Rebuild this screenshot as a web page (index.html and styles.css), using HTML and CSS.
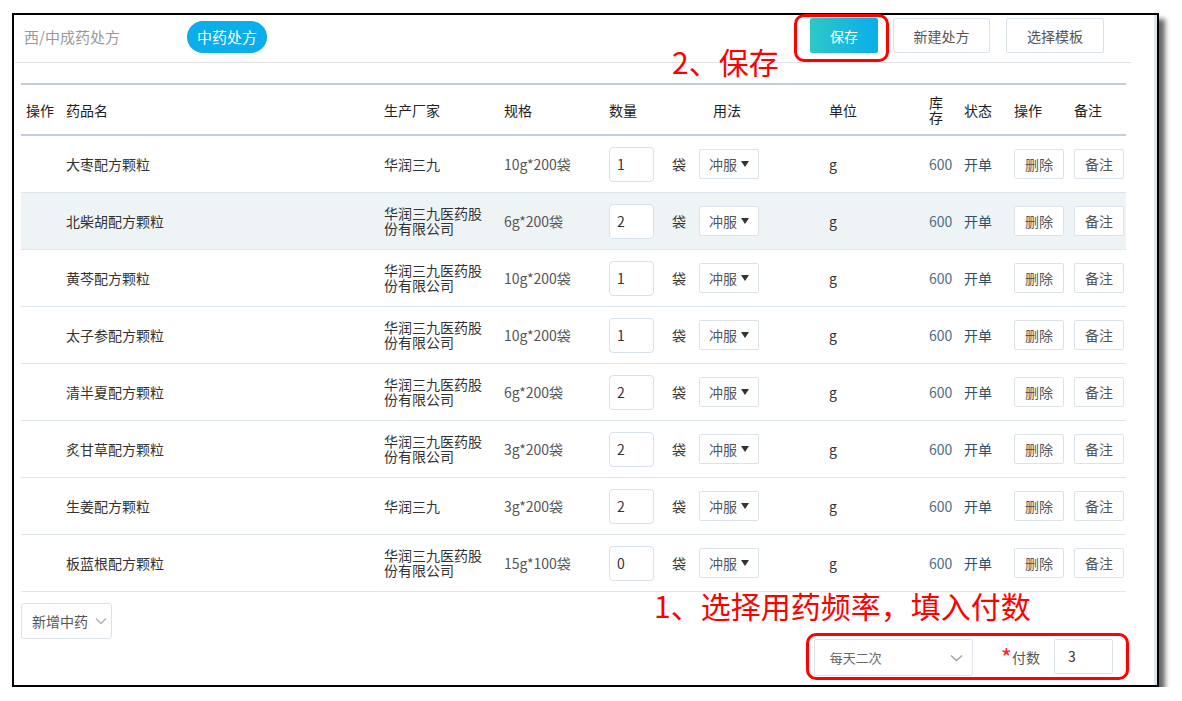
FILE: index.html
```html
<!DOCTYPE html>
<html lang="zh-CN">
<head>
<meta charset="utf-8">
<title>中药处方</title>
<link rel="stylesheet" href="styles.css">
</head>
<body>
<div class="page">
  <div class="window">
    <div class="inner">
      <div class="topbar">
        <div class="tab-plain">西/中成药处方</div>
        <div class="tab-pill">中药处方</div>
        <div class="actions">
          <div class="btn btn-primary">保存</div>
          <div class="btn">新建处方</div>
          <div class="btn btn-wide">选择模板</div>
        </div>
      </div>

      <div class="table">
        <div class="row head">
          <div class="c c1">操作</div>
          <div class="c">药品名</div>
          <div class="c">生产厂家</div>
          <div class="c">规格</div>
          <div class="c">数量</div>
          <div class="c"></div>
          <div class="c usage-h">用法</div>
          <div class="c">单位</div>
          <div class="c"><span class="stock-h">库存</span></div>
          <div class="c">状态</div>
          <div class="c">操作</div>
          <div class="c">备注</div>
        </div>

        <div class="row">
          <div class="c c1"></div>
          <div class="c">大枣配方颗粒</div>
          <div class="c"><span class="maker">华润三九</span></div>
          <div class="c spec">10g*200袋</div>
          <div class="c"><div class="qty">1</div></div>
          <div class="c">袋</div>
          <div class="c"><div class="usage">冲服<svg width="8" height="6" viewBox="0 0 8 6"><polygon points="0,0 8,0 4,6" fill="#333"/></svg></div></div>
          <div class="c">g</div>
          <div class="c stock">600</div>
          <div class="c state">开单</div>
          <div class="c"><div class="sbtn">删除</div></div>
          <div class="c"><div class="sbtn">备注</div></div>
        </div>

        <div class="row hover">
          <div class="c c1"></div>
          <div class="c">北柴胡配方颗粒</div>
          <div class="c"><span class="maker">华润三九医药股份有限公司</span></div>
          <div class="c spec">6g*200袋</div>
          <div class="c"><div class="qty">2</div></div>
          <div class="c">袋</div>
          <div class="c"><div class="usage">冲服<svg width="8" height="6" viewBox="0 0 8 6"><polygon points="0,0 8,0 4,6" fill="#333"/></svg></div></div>
          <div class="c">g</div>
          <div class="c stock">600</div>
          <div class="c state">开单</div>
          <div class="c"><div class="sbtn">删除</div></div>
          <div class="c"><div class="sbtn">备注</div></div>
        </div>

        <div class="row">
          <div class="c c1"></div>
          <div class="c">黄芩配方颗粒</div>
          <div class="c"><span class="maker">华润三九医药股份有限公司</span></div>
          <div class="c spec">10g*200袋</div>
          <div class="c"><div class="qty">1</div></div>
          <div class="c">袋</div>
          <div class="c"><div class="usage">冲服<svg width="8" height="6" viewBox="0 0 8 6"><polygon points="0,0 8,0 4,6" fill="#333"/></svg></div></div>
          <div class="c">g</div>
          <div class="c stock">600</div>
          <div class="c state">开单</div>
          <div class="c"><div class="sbtn">删除</div></div>
          <div class="c"><div class="sbtn">备注</div></div>
        </div>

        <div class="row">
          <div class="c c1"></div>
          <div class="c">太子参配方颗粒</div>
          <div class="c"><span class="maker">华润三九医药股份有限公司</span></div>
          <div class="c spec">10g*200袋</div>
          <div class="c"><div class="qty">1</div></div>
          <div class="c">袋</div>
          <div class="c"><div class="usage">冲服<svg width="8" height="6" viewBox="0 0 8 6"><polygon points="0,0 8,0 4,6" fill="#333"/></svg></div></div>
          <div class="c">g</div>
          <div class="c stock">600</div>
          <div class="c state">开单</div>
          <div class="c"><div class="sbtn">删除</div></div>
          <div class="c"><div class="sbtn">备注</div></div>
        </div>

        <div class="row">
          <div class="c c1"></div>
          <div class="c">清半夏配方颗粒</div>
          <div class="c"><span class="maker">华润三九医药股份有限公司</span></div>
          <div class="c spec">6g*200袋</div>
          <div class="c"><div class="qty">2</div></div>
          <div class="c">袋</div>
          <div class="c"><div class="usage">冲服<svg width="8" height="6" viewBox="0 0 8 6"><polygon points="0,0 8,0 4,6" fill="#333"/></svg></div></div>
          <div class="c">g</div>
          <div class="c stock">600</div>
          <div class="c state">开单</div>
          <div class="c"><div class="sbtn">删除</div></div>
          <div class="c"><div class="sbtn">备注</div></div>
        </div>

        <div class="row">
          <div class="c c1"></div>
          <div class="c">炙甘草配方颗粒</div>
          <div class="c"><span class="maker">华润三九医药股份有限公司</span></div>
          <div class="c spec">3g*200袋</div>
          <div class="c"><div class="qty">2</div></div>
          <div class="c">袋</div>
          <div class="c"><div class="usage">冲服<svg width="8" height="6" viewBox="0 0 8 6"><polygon points="0,0 8,0 4,6" fill="#333"/></svg></div></div>
          <div class="c">g</div>
          <div class="c stock">600</div>
          <div class="c state">开单</div>
          <div class="c"><div class="sbtn">删除</div></div>
          <div class="c"><div class="sbtn">备注</div></div>
        </div>

        <div class="row">
          <div class="c c1"></div>
          <div class="c">生姜配方颗粒</div>
          <div class="c"><span class="maker">华润三九</span></div>
          <div class="c spec">3g*200袋</div>
          <div class="c"><div class="qty">2</div></div>
          <div class="c">袋</div>
          <div class="c"><div class="usage">冲服<svg width="8" height="6" viewBox="0 0 8 6"><polygon points="0,0 8,0 4,6" fill="#333"/></svg></div></div>
          <div class="c">g</div>
          <div class="c stock">600</div>
          <div class="c state">开单</div>
          <div class="c"><div class="sbtn">删除</div></div>
          <div class="c"><div class="sbtn">备注</div></div>
        </div>

        <div class="row">
          <div class="c c1"></div>
          <div class="c">板蓝根配方颗粒</div>
          <div class="c"><span class="maker">华润三九医药股份有限公司</span></div>
          <div class="c spec">15g*100袋</div>
          <div class="c"><div class="qty">0</div></div>
          <div class="c">袋</div>
          <div class="c"><div class="usage">冲服<svg width="8" height="6" viewBox="0 0 8 6"><polygon points="0,0 8,0 4,6" fill="#333"/></svg></div></div>
          <div class="c">g</div>
          <div class="c stock">600</div>
          <div class="c state">开单</div>
          <div class="c"><div class="sbtn">删除</div></div>
          <div class="c"><div class="sbtn">备注</div></div>
        </div>
      </div>

      <div class="add-row">
        <div class="add-btn">新增中药<svg width="12" height="8" viewBox="0 0 12 8"><polyline points="1,1.5 6,6.5 11,1.5" fill="none" stroke="#a9b1b9" stroke-width="1.3"/></svg></div>
      </div>

      <div class="freq-row">
        <div class="freq-select">每天二次<svg width="13" height="8" viewBox="0 0 13 8"><polyline points="1,1.5 6.5,6.5 12,1.5" fill="none" stroke="#9aa3ab" stroke-width="1.4"/></svg></div>
        <div class="dose-label"><span class="req">*</span>付数</div>
        <div class="dose-input">3</div>
      </div>
    </div>

    <div class="note note-save">2、保存</div>
    <div class="mark mark-save"></div>
    <div class="note note-freq">1、选择用药频率，填入付数</div>
    <div class="mark mark-freq"></div>
  </div>
</div>
</body>
</html>
```

FILE: styles.css
```css
* { box-sizing: border-box; }
html, body { margin: 0; padding: 0; background: #fff; }
body {
  font-family: "Noto Sans CJK SC", "Noto Sans", sans-serif;
  font-size: 14px;
  color: #333;
}
.page {
  padding: 13px 0 0 12px;
}
.window {
  position: relative;
  width: 1147px;
  height: 674px;
  border: 2px solid #000;
  background: #fff;
  box-shadow: 6px 6px 5px rgba(0, 0, 0, 0.6);
}
.inner {
  height: 100%;
  border-right: 3px solid #dde6ef;
  display: flex;
  flex-direction: column;
}

/* top bar */
.topbar {
  height: 48px;
  margin: 0 23px 0 1px;
  padding: 3px 27px 0 9px;
  border-bottom: 1px solid #dfe3e8;
  display: flex;
  align-items: flex-start;
}
.tab-plain {
  width: 163px;
  height: 32px;
  margin-top: 3px;
  line-height: 32px;
  font-size: 15px;
  color: #9a9a9a;
}
.tab-pill {
  height: 32px;
  margin-top: 3px;
  padding: 0 10px;
  line-height: 32px;
  border-radius: 16px;
  background: #0badea;
  color: #fff;
  font-size: 15px;
}
.actions {
  margin-left: auto;
  display: flex;
  gap: 15px;
}
.btn {
  width: 97px;
  height: 35px;
  border: 1px solid #dbe3ea;
  border-radius: 2px;
  display: flex;
  align-items: center;
  justify-content: center;
  font-size: 14px;
  color: #555;
  background: #fff;
}
.btn-wide { width: 98px; margin-left: 1px; }
.btn-primary {
  width: 68px;
  border: none;
  color: #fff;
  background: linear-gradient(90deg, #2fc7c7 0%, #08aeea 100%);
}

/* table */
.table {
  margin: 20px 28px 0 7px;
  border-top: 2px solid #c2cedb;
}
.row {
  display: grid;
  grid-template-columns: 45px 318px 120px 105px 63px 27px 130px 100px 35px 50px 60px 55px;
  height: 57px;
  border-bottom: 1px solid #dde5ed;
  align-items: center;
}
.row.head {
  height: 51px;
  border-bottom: 2px solid #c2cedb;
  color: #222;
}
.row.hover { background: #eef3f6; }
.c {
  display: flex;
  align-items: center;
  white-space: nowrap;
}
.c1 { padding-left: 5px; }
.usage-h { padding-left: 14px; }
.stock-h {
  display: block;
  width: 14px;
  white-space: normal;
  line-height: 15px;
}
.maker {
  display: block;
  width: 100px;
  white-space: normal;
  line-height: 15px;
}
.spec { color: #555; }
.qty {
  width: 45px;
  height: 35px;
  border: 1px solid #d6e1ea;
  border-radius: 4px;
  background: #fff;
  padding-left: 7px;
  line-height: 33px;
}
.usage {
  width: 60px;
  height: 30px;
  border: 1px solid #dbe3ea;
  border-radius: 2px;
  background: #fff;
  display: flex;
  align-items: center;
  padding-left: 9px;
  gap: 4px;
  color: #555;
}
.stock { color: #4d6d84; }
.state { color: #2f5068; }
.sbtn {
  width: 50px;
  height: 30px;
  border: 1px solid #dbe3ea;
  border-radius: 2px;
  background: #fff;
  display: flex;
  align-items: center;
  justify-content: center;
  color: #555;
}

/* bottom */
.add-row {
  padding: 11px 0 0 7px;
}
.add-btn {
  width: 91px;
  height: 36px;
  border: 1px solid #dbe3ea;
  border-radius: 3px;
  display: flex;
  align-items: center;
  padding-left: 10px;
  gap: 7px;
  color: #555;
}
.freq-row {
  display: flex;
  justify-content: flex-end;
  align-items: flex-start;
  padding-right: 41px;
}
.freq-select {
  width: 159px;
  height: 37px;
  border: 1px solid #dde4ec;
  border-radius: 2px;
  display: flex;
  align-items: center;
  justify-content: space-between;
  padding: 0 9px 0 15px;
  font-size: 13px;
  color: #666;
}
.dose-label {
  margin-left: 28px;
  height: 35px;
  display: flex;
  align-items: center;
  color: #555;
}
.req {
  color: #ff2020;
  font-size: 24px;
  line-height: 1;
  margin-right: 0;
  position: relative;
  top: 0;
}
.dose-input {
  width: 59px;
  height: 35px;
  margin-left: 14px;
  border: 1px solid #dbe3ea;
  border-radius: 2px;
  padding-left: 13px;
  line-height: 33px;
  color: #333;
}

/* annotations */
.note {
  position: absolute;
  color: #ff0000;
  font-size: 30px;
  line-height: 30px;
  white-space: nowrap;
}
.note-save { left: 658px; top: 31px; }
.note-freq { left: 640px; top: 575px; }
.mark {
  position: absolute;
  border: 3px solid #ff0000;
  border-radius: 10px;
}
.mark-save { left: 780px; top: -1px; width: 95px; height: 48px; }
.mark-freq { left: 792px; top: 618px; width: 323px; height: 47px; }
```
